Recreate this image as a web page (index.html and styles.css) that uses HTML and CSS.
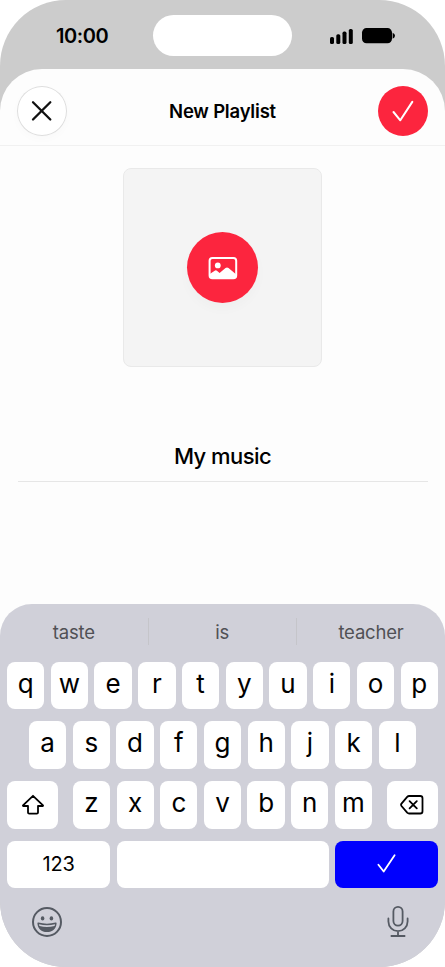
FILE: index.html
```html
<!DOCTYPE html>
<html lang="en">
<head>
<meta charset="utf-8">
<title>New Playlist</title>
<link rel="stylesheet" href="styles.css">
</head>
<body>
<div class="phone">
  <div class="status">
    <span class="time">10:00</span>
    <span class="island"></span>
    <svg class="signals" width="66" height="18" viewBox="0 0 66 18">
      <rect x="0" y="10" width="4" height="7" rx="1.6"/>
      <rect x="6.3" y="7.2" width="4" height="9.8" rx="1.6"/>
      <rect x="12.5" y="4.6" width="4" height="12.4" rx="1.6"/>
      <rect x="18.8" y="2" width="4" height="15" rx="1.6"/>
      <rect x="32" y="1.1" width="30" height="15.2" rx="4.5"/>
      <path d="M62.6 5.8Q65 7 65 8.8T62.6 11.8Z"/>
    </svg>
  </div>
  <main class="sheet">
    <header class="bar">
      <button class="round close" aria-label="Close"><svg width="50" height="50" viewBox="0 0 50 50"><path d="M16 16.2l17.3 17.3M33.3 16.2L16 33.5"/></svg></button>
      <h1 class="title">New Playlist</h1>
      <button class="round done" aria-label="Done"><svg width="50" height="50" viewBox="0 0 50 50"><path d="M15.5 26l6.8 8.3L34.3 15.9"/></svg></button>
    </header>
    <div class="cover">
      <button class="pick" aria-label="Choose image"><svg width="30" height="24" viewBox="0 0 30 24">
        <rect class="frame" x="1.6" y="2" width="26.6" height="20.2" rx="2.8"/>
        <circle cx="9.8" cy="9.4" r="2.9"/>
        <path d="M1.8 18L6.7 14.7Q8 13.9 9.2 15L11.6 17L17.5 12Q19 10.8 20.5 12L28 18.3V20Q28 22.3 25.5 22.3H4Q1.8 22.3 1.8 20Z"/>
      </svg></button>
    </div>
    <div class="name"><span>My music</span></div>
  </main>
  <section class="keyboard">
    <div class="hints"><span>taste</span><span>is</span><span>teacher</span></div>
    <div class="row"><kbd>q</kbd><kbd>w</kbd><kbd>e</kbd><kbd>r</kbd><kbd>t</kbd><kbd>y</kbd><kbd>u</kbd><kbd>i</kbd><kbd>o</kbd><kbd>p</kbd></div>
    <div class="row inset"><kbd>a</kbd><kbd>s</kbd><kbd>d</kbd><kbd>f</kbd><kbd>g</kbd><kbd>h</kbd><kbd>j</kbd><kbd>k</kbd><kbd>l</kbd></div>
    <div class="row">
      <kbd class="side shift"><svg width="24" height="22" viewBox="0 0 24 22"><path d="M12 1.8L22 11.4Q22.3 12 21.6 12H17V18.4Q17 19.6 15.8 19.6H8.2Q7 19.6 7 18.4V12H2.4Q1.7 12 2 11.4Z"/></svg></kbd>
      <kbd>z</kbd><kbd>x</kbd><kbd>c</kbd><kbd>v</kbd><kbd>b</kbd><kbd>n</kbd><kbd>m</kbd>
      <kbd class="side erase"><svg width="24" height="20" viewBox="0 0 24 20"><path d="M9.1 1H20.2Q22.5 1 22.5 3.3V16.2Q22.5 18.5 20.2 18.5H9.1Q8 18.5 7.2 17.7L1.5 11Q.6 9.8 1.5 8.6L7.2 1.8Q8 1 9.1 1ZM9.6 6.1l7.2 7.2M16.8 6.1l-7.2 7.2"/></svg></kbd>
    </div>
    <div class="row">
      <kbd class="wide">123</kbd><kbd class="space"></kbd>
      <kbd class="wide enter"><svg width="20" height="20" viewBox="0 0 20 20"><path d="M1.4 10.7l5.3 6.8L17.6 1.3"/></svg></kbd>
    </div>
    <div class="tools">
      <svg width="32" height="32" viewBox="0 0 32 32">
        <circle class="line" cx="16" cy="16" r="14"/>
        <ellipse cx="11.6" cy="12.4" rx="1.8" ry="2.1"/><ellipse cx="20.4" cy="12.4" rx="1.8" ry="2.1"/>
        <path fill-rule="evenodd" d="M6.4 17.2Q6.5 16.2 7.4 16.6Q16 18.9 24.6 16.6Q25.5 16.2 25.6 17.2C25.3 22.5 21.5 26.1 16 26.1S6.7 22.5 6.4 17.2ZM7.9 18.2Q8.1 19.2 8.5 20Q16 22.2 23.5 20Q23.9 19.2 24.1 18.2Q16 20.3 7.9 18.2Z"/>
      </svg>
      <svg width="24" height="34" viewBox="0 0 24 34"><path class="line thin" d="M7.4 6.5a4.6 4.6 0 0 1 9.2 0V16a4.6 4.6 0 0 1-9.2 0ZM2.4 13.5V16.5a9.6 9.6 0 0 0 19.2 0V13.5M12 26.2V31M5.4 31H18.6"/></svg>
    </div>
  </section>
</div>
</body>
</html>
```

FILE: styles.css
```css
* { box-sizing: border-box; }
body { margin: 0; background: #fff; font-family: Inter, "Liberation Sans", sans-serif; color: #000; }
svg { display: block; }
button { border: 0; padding: 0; background: none; }
.phone { width: 445px; height: 967px; display: flex; flex-direction: column; overflow: hidden; border-radius: 66px; background: #ccc; }
.status { height: 68.5px; flex: none; display: grid; grid-template-columns: 152.5px 139.5px 1fr; padding-top: 15px; align-items: start; }
.time { padding: 8px 0 0 56px; font-size: 20px; line-height: 26px; font-weight: 600; letter-spacing: -.45px; }
.island { height: 41px; border-radius: 21px; background: #fff; }
.signals { margin: 12px 0 0 37.5px; }
.sheet { height: 535.5px; flex: none; background: #fdfdfd; border-radius: 42px 42px 0 0; box-shadow: 0 60px 0 #fdfdfd; }
.bar { height: 77.5px; padding: 17px 17px 0; display: flex; justify-content: space-between; align-items: flex-start; border-bottom: 1px solid #f1f1f1; }
.round { width: 50px; height: 50px; border-radius: 50%; }
.round path { fill: none; stroke: #111; stroke-width: 2.3; stroke-linecap: round; stroke-linejoin: round; }
.close { background: #fff; box-shadow: inset 0 0 0 1px #dedede, 0 3px 10px rgba(0,0,0,.02); }
.done { background: #fc253e; }
.done path { stroke: #fff; stroke-width: 2; }
.title { margin: 12px 0 0; font-size: 18.5px; line-height: 26px; font-weight: 600; letter-spacing: -.2px; }
.cover { width: 199px; height: 199px; margin: 22px auto 0; display: flex; align-items: center; justify-content: center; background: #f4f4f4; border: 1px solid #e9e9e9; border-radius: 8px; }
.pick { width: 71px; height: 71px; border-radius: 50%; display: flex; align-items: center; justify-content: center; background: #fc253e; box-shadow: 0 6px 12px rgba(0,0,0,.025); }
.pick svg { fill: #fff; }
.pick .frame { fill: none; stroke: #fff; stroke-width: 2; }
.name { margin: 73.5px 17.5px 0; height: 41px; border-bottom: 1px solid #e6e6e6; text-align: center; font-size: 22px; line-height: 31px; font-weight: 500; letter-spacing: -.55px; }
.keyboard { position: relative; height: 363px; flex: none; padding: 0 7px; display: flex; flex-direction: column; background: #d0d0d9; border-radius: 32px 32px 0 0; }
.hints { display: grid; grid-template-columns: 147.5px 148.5px 149px; height: 57.5px; margin: 0 -7px; padding-top: 14px; flex: none; }
.hints span { height: 27px; line-height: 28px; text-align: center; font-size: 18.5px; letter-spacing: -.2px; color: #505055; }
.hints span + span { border-left: 1px solid #c5c5ca; }
.row { display: flex; justify-content: space-between; height: 47.5px; margin-bottom: 12.3px; flex: none; }
.row.inset { padding: 0 22px; }
kbd { width: 37.3px; border-radius: 8px; background: #fff; display: flex; justify-content: center; font: 400 26px/44px Inter, sans-serif; }
kbd svg { align-self: center; fill: none; stroke: #000; stroke-width: 1.8; stroke-linejoin: round; stroke-linecap: round; }
.side { width: 51px; }
.shift { margin-right: 8.5px; }
.erase { margin-left: 8.5px; }
.wide { width: 103px; font-size: 20px; line-height: 47px; letter-spacing: -.2px; }
.space { width: 212px; }
.enter { background: #0000fe; }
.enter svg { stroke: #fff; margin-top: -2px; }
.tools { display: flex; justify-content: space-between; align-items: center; padding: 4.5px 28px 0 24px; fill: #555a63; }
.line { fill: none; stroke: #555a63; stroke-width: 2; stroke-linecap: round; }
.thin { stroke-width: 1.8; }
```
